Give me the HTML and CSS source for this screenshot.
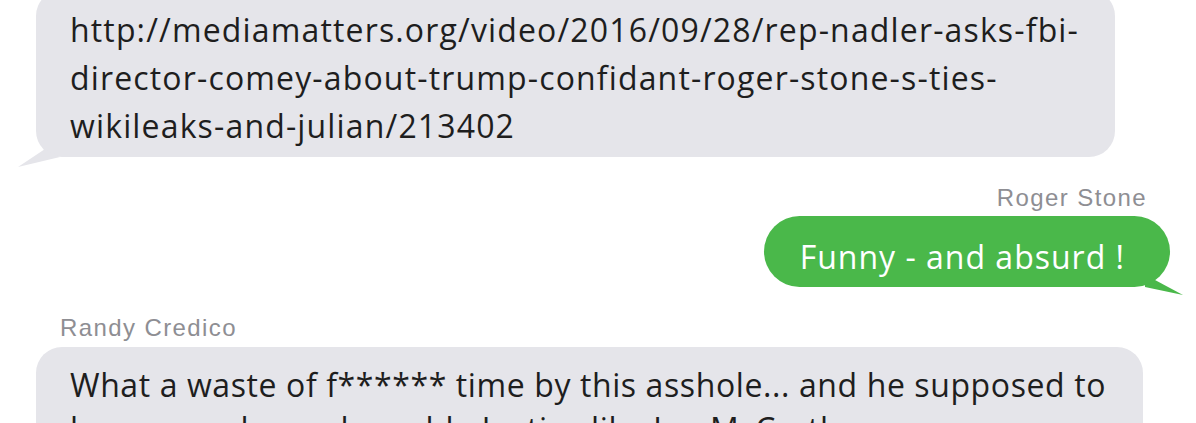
FILE: index.html
```html
<!DOCTYPE html>
<html lang="en">
<head>
    <meta charset="UTF-8">
    <title>Messages</title>
    <link rel="stylesheet" href="styles.css">
</head>
<body>
<div class="thread">
    <div class="row">
        <div class="bubble received first">
            http://mediamatters.org/video/2016/09/28/rep-nadler-asks-fbi-<br>
            director-comey-about-trump-confidant-roger-stone-s-ties-<br>
            wikileaks-and-julian/213402
        </div>
    </div>

    <div class="sender right">Roger Stone</div>
    <div class="row right">
        <div class="bubble sent">Funny - and absurd !</div>
    </div>

    <div class="sender">Randy Credico</div>
    <div class="row">
        <div class="bubble received last">
            What a waste of f****** time by this asshole... and he supposed to<br>
            be a crusader and a noble Justice like Joe McCarthy
        </div>
    </div>
</div>
</body>
</html>
```

FILE: styles.css
```css
body {
    margin: 0;
    background-color: #fff;
    overflow: hidden;
}

.thread {
    display: flex;
    flex-direction: column;
    padding: 0 26px 0 36px;
}

.row {
    display: flex;
}

.row.right {
    justify-content: flex-end;
}

.bubble {
    position: relative;
    font-family: "Open Sans", sans-serif;
    font-size: 32px;
    letter-spacing: 1px;
    color: #1e1e1e;
    border-radius: 26px;
}

.bubble.received {
    background-color: #e5e5ea;
    padding: 16px 34px 7px 34px;
    line-height: 48px;
}

.bubble.first {
    width: 1011px;
    letter-spacing: 1.15px;
    margin-top: -10px;
}

.bubble.last {
    width: 1039px;
    line-height: 44px;
    letter-spacing: 0.6px;
    margin-top: 5px;
}

/* tail on the received bubble */
.bubble.first::before {
    content: "";
    position: absolute;
    left: -18px;
    bottom: -10px;
    width: 42px;
    height: 18px;
    background-color: #e5e5ea;
    clip-path: polygon(27px 0, 42px 8px, 0 18px);
}

.bubble.sent {
    background-color: #4ab84a;
    color: #fff;
    line-height: 47px;
    padding: 17px 45px 7px 36px;
    border-radius: 36px;
    margin-top: 4px;
}

.bubble.sent::after {
    content: "";
    position: absolute;
    right: -13px;
    bottom: -9px;
    width: 43px;
    height: 19px;
    background-color: #4ab84a;
    clip-path: polygon(5px 10px, 5px 3px, 15px 3px, 43px 18px);
}

.sender {
    font-family: "Liberation Sans", Arial, sans-serif;
    font-size: 24px;
    letter-spacing: 1.4px;
    line-height: 28px;
    color: #8e8e93;
    margin: 27px 0 0 24px;
}

.sender.right {
    align-self: flex-end;
    margin: 27px 23px 0 0;
}
```
